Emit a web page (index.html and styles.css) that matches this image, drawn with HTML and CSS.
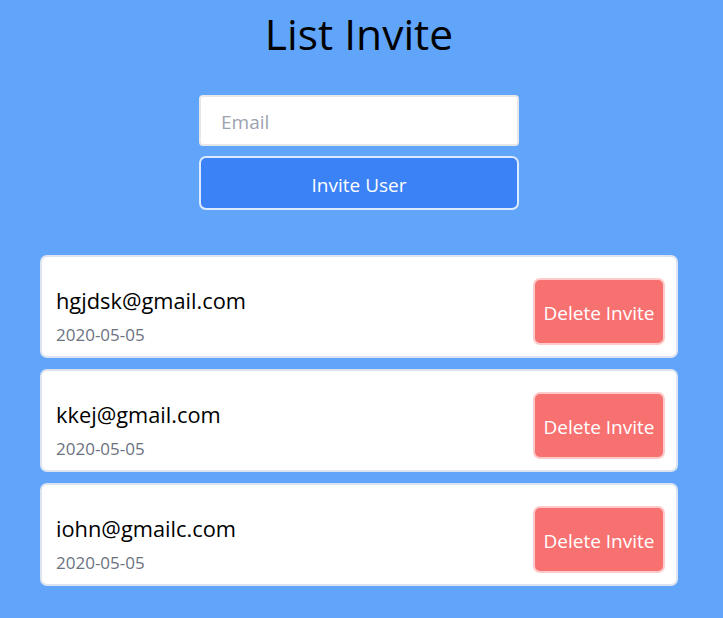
FILE: index.html
```html
<!DOCTYPE html>
<html>
<head>
<meta charset="utf-8">
<link rel="stylesheet" href="styles.css">
</head>
<body>
<main class="page">
  <h1 class="title">List Invite</h1>
  <form class="invite-form">
    <input class="email-input" type="text" placeholder="Email">
    <button class="invite-btn" type="button">Invite User</button>
  </form>
  <ul class="invite-list">
    <li class="invite-card">
      <div class="invite-info">
        <div class="invite-email">hgjdsk@gmail.com</div>
        <div class="invite-date">2020-05-05</div>
      </div>
      <button class="delete-btn" type="button">Delete Invite</button>
    </li>
    <li class="invite-card">
      <div class="invite-info">
        <div class="invite-email">kkej@gmail.com</div>
        <div class="invite-date">2020-05-05</div>
      </div>
      <button class="delete-btn" type="button">Delete Invite</button>
    </li>
    <li class="invite-card">
      <div class="invite-info">
        <div class="invite-email">iohn@gmailc.com</div>
        <div class="invite-date">2020-05-05</div>
      </div>
      <button class="delete-btn" type="button">Delete Invite</button>
    </li>
  </ul>
</main>
</body>
</html>
```
FILE: styles.css
```css
html, body {
  margin: 0;
  padding: 0;
}
body {
  background: #60a5fa;
  font-family: "Open Sans", "Noto Sans", sans-serif;
  color: #000;
  min-height: 618px;
}
.page {
  width: 638px;
  margin-left: 40px;
  display: flex;
  flex-direction: column;
  align-items: center;
}
.title {
  margin: 4px 0 0 0;
  font-size: 42.5px;
  line-height: 60px;
  font-weight: 400;
}
.invite-form {
  width: 320px;
  margin-top: 31px;
  display: flex;
  flex-direction: column;
  gap: 10px;
}
.email-input {
  box-sizing: border-box;
  height: 51px;
  width: 100%;
  border: 2px solid #e5e7eb;
  border-radius: 4px;
  padding: 2px 20px 0 20px;
  font-family: inherit;
  font-size: 19px;
  outline: none;
  background: #fff;
}
.email-input::placeholder {
  color: #9ca3af;
}
.invite-btn {
  box-sizing: border-box;
  height: 54px;
  width: 100%;
  padding: 3px 0 0 0;
  background: #3b82f6;
  border: 2px solid #dbeafe;
  border-radius: 7px;
  color: #fff;
  font-family: inherit;
  font-size: 19px;
}
.invite-list {
  list-style: none;
  margin: 45px 0 0 0;
  padding: 0;
  width: 100%;
  display: flex;
  flex-direction: column;
  gap: 11px;
}
.invite-card {
  box-sizing: border-box;
  height: 103px;
  background: #fff;
  border: 2px solid #dbe4ef;
  border-radius: 7px;
  padding: 0 11px 8px 14px;
  display: flex;
  align-items: flex-end;
  justify-content: space-between;
}
.invite-info {
  display: flex;
  flex-direction: column;
}
.invite-email {
  font-size: 21.8px;
  line-height: 30px;
}
.invite-date {
  margin-top: 6px;
  font-size: 17px;
  line-height: 26px;
  color: #6b7280;
}
.delete-btn {
  box-sizing: border-box;
  width: 132px;
  height: 67px;
  margin-bottom: 3px;
  padding: 3px 0 0 0;
  background: #f87171;
  border: 2px solid #fecaca;
  border-radius: 7px;
  color: #fff;
  font-family: inherit;
  font-size: 19px;
}
```
